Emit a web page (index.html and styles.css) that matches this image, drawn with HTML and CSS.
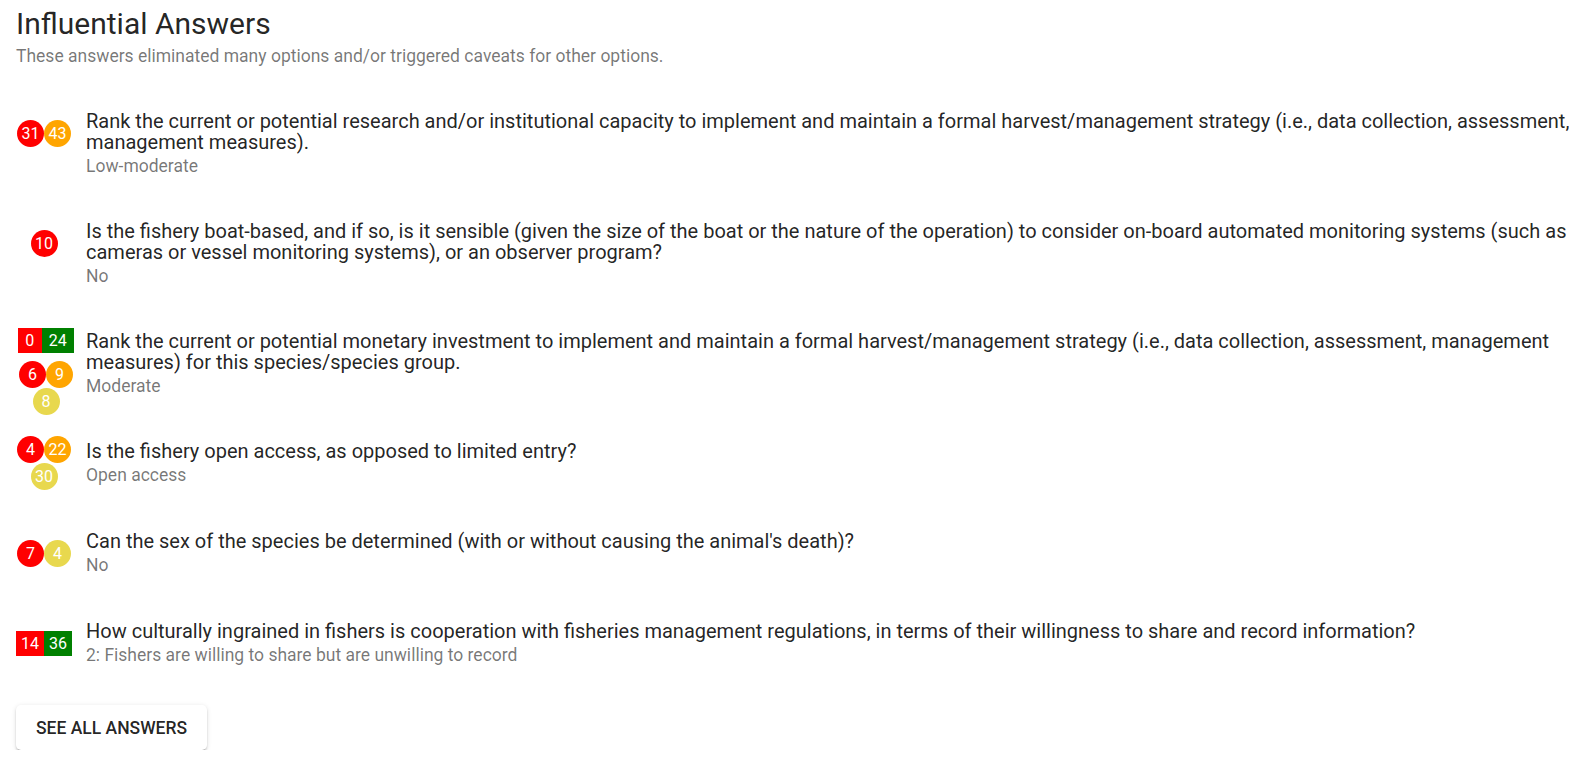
FILE: index.html
```html
<!DOCTYPE html>
<html lang="en">
<head>
<meta charset="utf-8">
<title>Influential Answers</title>
<link rel="stylesheet" href="styles.css">
</head>
<body>
<main class="page">
  <h1 class="title">Influential Answers</h1>
  <p class="subtitle">These answers eliminated many options and/or triggered caveats for other options.</p>

  <ul class="answers">
    <li class="item three">
      <div class="avatar">
        <div class="dots">
          <span class="dot red">31</span><span class="dot orange">43</span>
        </div>
      </div>
      <div class="text">
        <div class="question">Rank the current or potential research and/or institutional capacity to implement and maintain a formal harvest/management strategy (i.e., data collection, assessment, management measures).</div>
        <div class="answer">Low-moderate</div>
      </div>
    </li>

    <li class="item three">
      <div class="avatar">
        <div class="dots">
          <span class="dot red">10</span>
        </div>
      </div>
      <div class="text">
        <div class="question">Is the fishery boat-based, and if so, is it sensible (given the size of the boat or the nature of the operation) to consider on-board automated monitoring systems (such as cameras or vessel monitoring systems), or an observer program?</div>
        <div class="answer">No</div>
      </div>
    </li>

    <li class="item three">
      <div class="avatar shifted">
        <div class="bars">
          <span class="bar red">0</span><span class="bar green">24</span>
        </div>
        <div class="dots">
          <span class="dot red">6</span><span class="dot orange">9</span><span class="dot yellow">8</span>
        </div>
      </div>
      <div class="text">
        <div class="question">Rank the current or potential monetary investment to implement and maintain a formal harvest/management strategy (i.e., data collection, assessment, management measures) for this species/species group.</div>
        <div class="answer">Moderate</div>
      </div>
    </li>

    <li class="item two">
      <div class="avatar">
        <div class="dots">
          <span class="dot red">4</span><span class="dot orange">22</span><span class="dot yellow">30</span>
        </div>
      </div>
      <div class="text">
        <div class="question">Is the fishery open access, as opposed to limited entry?</div>
        <div class="answer">Open access</div>
      </div>
    </li>

    <li class="item two">
      <div class="avatar">
        <div class="dots">
          <span class="dot red">7</span><span class="dot yellow">4</span>
        </div>
      </div>
      <div class="text">
        <div class="question">Can the sex of the species be determined (with or without causing the animal's death)?</div>
        <div class="answer">No</div>
      </div>
    </li>

    <li class="item two">
      <div class="avatar">
        <div class="bars">
          <span class="bar red">14</span><span class="bar green">36</span>
        </div>
      </div>
      <div class="text">
        <div class="question">How culturally ingrained in fishers is cooperation with fisheries management regulations, in terms of their willingness to share and record information?</div>
        <div class="answer">2: Fishers are willing to share but are unwilling to record</div>
      </div>
    </li>
  </ul>

  <button class="see-all" type="button">SEE ALL ANSWERS</button>
</main>
</body>
</html>
```

FILE: styles.css
```css
* {
  box-sizing: border-box;
}

html, body {
  margin: 0;
  padding: 0;
  background: #ffffff;
}

body {
  font-family: Roboto, "Noto Sans", "Liberation Sans", sans-serif;
  color: rgba(0, 0, 0, 0.87);
}

.page {
  padding: 6px 16px 0 16px;
}

.title {
  margin: 0;
  font-size: 30px;
  font-weight: 400;
  line-height: normal;
  color: rgba(0, 0, 0, 0.87);
}

.subtitle {
  margin: 5px 0 0 0;
  font-size: 17.5px;
  line-height: normal;
  color: rgba(0, 0, 0, 0.54);
}

.answers {
  list-style: none;
  margin: 22px 0 0 0;
  padding: 0;
}

.item {
  display: flex;
  align-items: center;
}

.item.three {
  height: 110px;
}

.item.two {
  height: 90px;
}

.avatar {
  flex: 0 0 56px;
  width: 56px;
  display: flex;
  flex-direction: column;
  justify-content: center;
  align-items: center;
}

.item.three .avatar {
  align-self: flex-start;
  margin-top: 20px;
  min-height: 50px;
}

.avatar.shifted {
  transform: translateX(2px);
}

.text {
  flex: 1 1 auto;
  min-width: 0;
  margin-left: 14px;
}

.question {
  font-size: 20px;
  line-height: 21px;
  color: rgba(0, 0, 0, 0.87);
}

.answer {
  margin-top: 3px;
  font-size: 17.5px;
  line-height: normal;
  color: rgba(0, 0, 0, 0.54);
}

.bars {
  display: flex;
  width: 56px;
}

.bar {
  flex: 1 1 auto;
  height: 25px;
  line-height: 25px;
  text-align: center;
  font-size: 16px;
  color: #ffffff;
}

.bars + .dots {
  margin-top: 8px;
}

.dots {
  display: flex;
  flex-wrap: wrap;
  justify-content: center;
  width: 56px;
}

.dot {
  width: 27px;
  height: 27px;
  border-radius: 50%;
  line-height: 27px;
  text-align: center;
  font-size: 16px;
  color: #ffffff;
}

.red {
  background: #ff0000;
}

.orange {
  background: #ffa500;
}

.yellow {
  background: #e8d84e;
}

.green {
  background: #008000;
}

.see-all {
  margin-top: 17px;
  height: 45px;
  padding: 0 20px;
  border: none;
  border-radius: 5px;
  background: #ffffff;
  font-family: Roboto, "Noto Sans", "Liberation Sans", sans-serif;
  font-size: 17.5px;
  font-weight: 500;
  color: rgba(0, 0, 0, 0.87);
  box-shadow: 0 3px 1px -2px rgba(0, 0, 0, 0.2), 0 2px 2px 0 rgba(0, 0, 0, 0.14), 0 1px 5px 0 rgba(0, 0, 0, 0.12);
  cursor: pointer;
}
```
